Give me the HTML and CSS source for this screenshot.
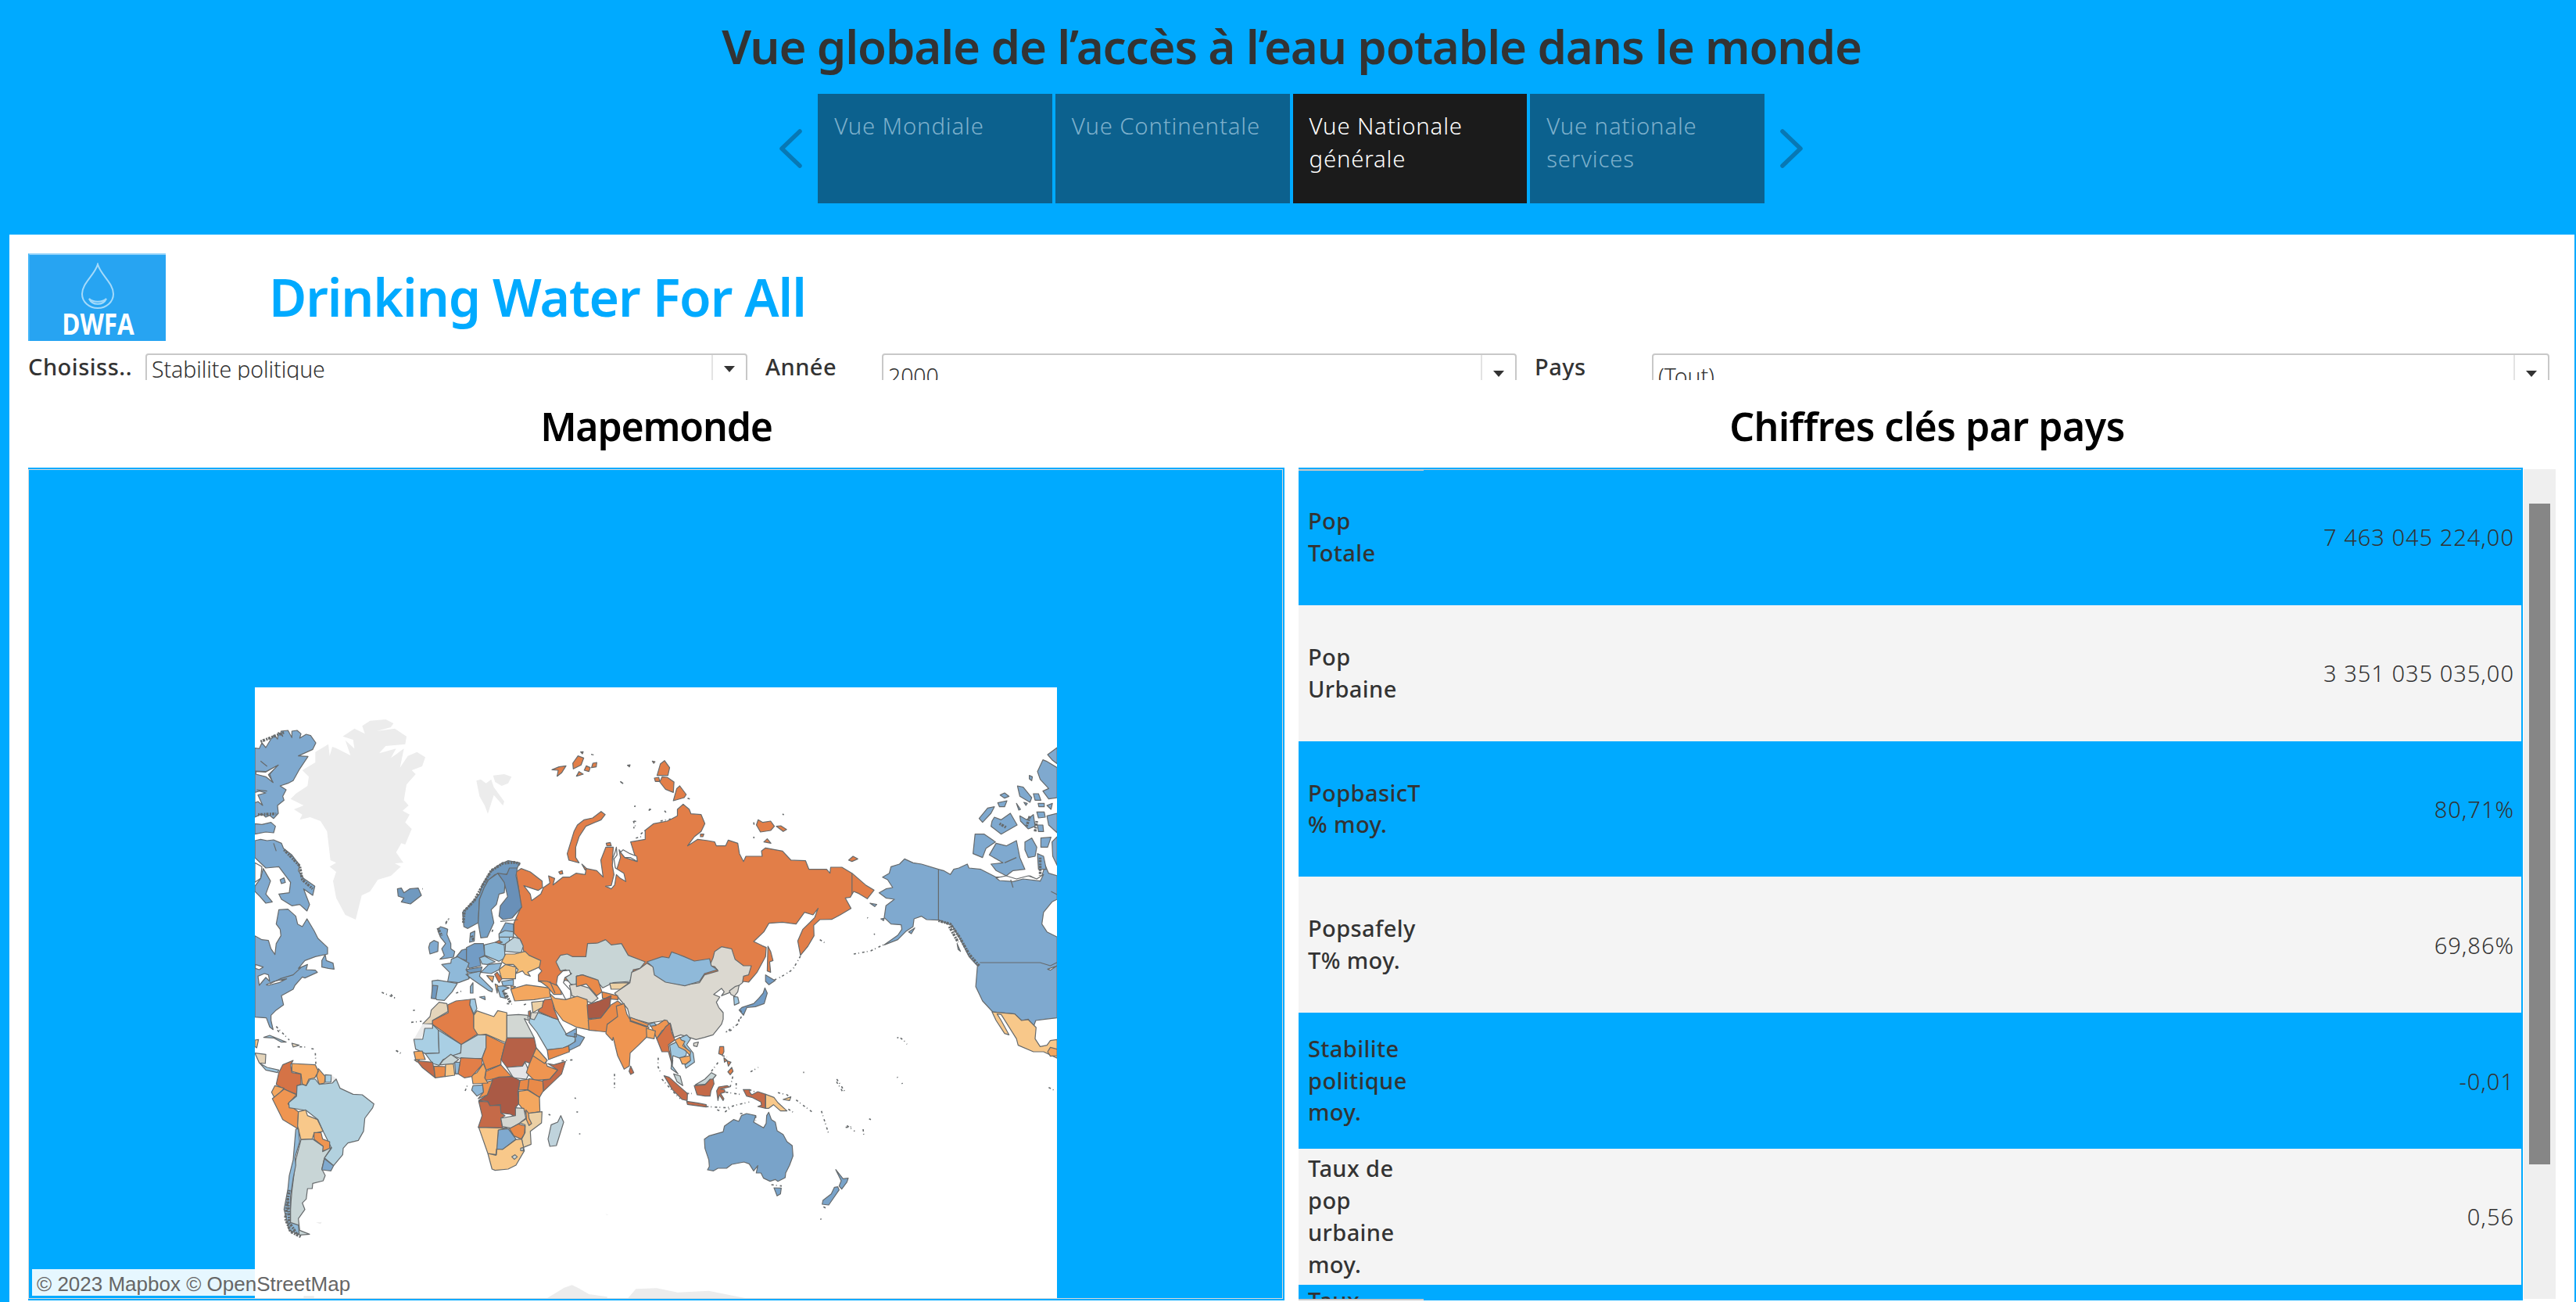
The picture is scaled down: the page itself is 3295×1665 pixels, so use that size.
FILE: index.html
```html
<!DOCTYPE html>
<html lang="fr">
<head>
<meta charset="utf-8">
<title>Drinking Water For All</title>
<link rel="stylesheet" href="styles.css">
</head>
<body>
<header class="story">
  <h1 class="story-title"><span>Vue globale de l’accès à l’eau potable dans le monde</span></h1>
  <nav class="story-nav">
    <svg class="chevron" viewBox="0 0 32 52"><path d="M28 4L5 26L28 48"/></svg>
    <div class="tabs">
      <a class="tab">Vue Mondiale</a>
      <a class="tab">Vue Continentale</a>
      <a class="tab active">Vue Nationale générale</a>
      <a class="tab">Vue nationale services</a>
    </div>
    <svg class="chevron" viewBox="0 0 32 52"><path d="M4 4L27 26L4 48"/></svg>
  </nav>
</header>
<main class="board">
  <div class="brand">
    <div class="logo">
      <svg class="drop" viewBox="0 0 46 60"><path d="M23 2C19 16 3 26 3 40A20 18 0 0 0 43 40C43 26 27 16 23 2Z"/><path d="M12 46C16 55 30 55 34 46"/><path d="M12 46C17 51 29 51 34 46"/></svg>
      <span class="logo-text">DWFA</span>
    </div>
    <h2 class="brand-title">Drinking Water For All</h2>
  </div>
  <div class="filters">
    <span class="f-label l1">Choisiss..</span>
    <div class="select s1"><span class="value">Stabilite politique</span><i class="arrow"></i></div>
    <span class="f-label l2">Année</span>
    <div class="select low s2"><span class="value">2000</span><i class="arrow"></i></div>
    <span class="f-label l3">Pays</span>
    <div class="select low s3"><span class="value">(Tout)</span><i class="arrow"></i></div>
  </div>
  <div class="views">
    <section class="view map-view">
      <h3 class="view-title t-map">Mapemonde</h3>
      <div class="map-frame">
        <svg class="map" viewBox="326 879 1026 781">
          <rect x="326" y="879" width="1026" height="781" fill="#fff"/>
          <!-- North Atlantic, eastern Canada -->
          <g transform="translate(320,870) scale(.33333)">
            <g class="void">
              <path d="M250 275L300 245L305 290L315 255L330 260L385 288L365 230L400 262L395 228L355 215L400 185L440 205L430 175L460 155L520 150L550 165L540 180L485 195L555 185L600 215L595 245L520 252L495 280L560 262L540 298L590 262L575 335L605 290L640 275L672 295L660 330L620 345L635 360L600 400L590 460L608 480L585 500L612 515L595 545L620 570L595 630L580 625L560 660L588 700L555 702L578 715L540 750L490 765L460 810L428 825L405 918L365 900L330 835L318 770L330 735L305 715L330 700L308 690L295 580L270 540L230 525L190 535L200 515L168 495L205 480L155 455L175 435L220 405L225 370L200 345L250 315Z"/>
              <path d="M868 385L885 380L905 395L925 380L935 410L975 465L970 480L935 440L912 512L900 480L880 445ZM932 365L975 360L1003 370L990 395L965 405L940 390Z"/>
            </g>
            <g class="us">
              <path d="M18 260L35 262L45 240L60 258L80 225L92 210L105 225L108 200L125 215L118 195L145 192L160 220L160 195L180 192L195 205L190 222L215 207L232 212L252 240L240 265L185 290L222 292L190 340L165 385L145 395L115 405L138 420L125 445L130 460L105 480L108 510L90 530L75 518L60 525L45 512L18 525Z"/>
              <path d="M18 550L45 553L80 545L97 560L90 585L60 582L18 590ZM18 615L40 610L65 615L90 612L120 625L128 645L160 670L190 710L185 730L205 760L248 790L240 825L205 800L228 860L218 885L190 860L160 865L120 840L110 820L150 815L155 775L110 715L60 720L18 680ZM18 790L40 760L50 722L78 770L60 820L85 850L60 855L38 830L18 810Z"/>
              <path d="M18 980L45 995L70 998L80 1030L95 1052L100 1010L118 980L115 955L100 935L110 880L145 878L175 905L182 935L200 945L218 915L245 960L260 990L297 1025L297 1050L250 1060L210 1075L185 1105L220 1090L215 1110L250 1112L258 1120L210 1142L200 1138L172 1170L165 1185L120 1210L128 1245L100 1265L80 1285L80 1305L88 1340L75 1330L62 1295L18 1292ZM275 1075L288 1052L292 1075L318 1085L322 1108L300 1105L275 1100ZM115 765L130 758L135 775L120 780Z"/>
              <path d="M18 700L45 715L40 760L18 775Z" fill="#fff"/>
              <path d="M20 1090L50 1100L35 1110L20 1105ZM30 1135L55 1125L70 1130L75 1155L60 1140L35 1170ZM62 1168L90 1155L140 1145L110 1160L70 1170Z" fill="#fff"/>
              <path d="M75 1165L115 1145L165 1130L195 1102M18 348L60 350L100 330L75 360L85 390M40 310L65 330M25 420L65 425M90 625L100 655" fill="none"/>
              <path d="M22 350L60 352L108 325L70 362L88 392L60 370L22 360ZM18 430L35 425L60 432L30 440L48 480L30 465L18 470Z" fill="#fff"/>
            </g>
            <path class="shag" d="M130 650L190 712L200 765L240 800M40 235L130 200M30 515L100 512" />
            <path class="b2" d="M565 800L580 797L590 815L612 800L645 797L657 825L615 858L580 850L590 835L568 828Z"/>
            <path class="ru" d="M1158 343L1185 332L1212 328L1195 355L1178 368L1182 345ZM1238 318L1258 290L1280 298L1270 325L1240 340ZM1310 335L1315 318L1330 315L1328 332ZM1282 345L1290 328L1305 335L1300 350ZM1252 368L1262 350L1278 360ZM1268 275L1278 274L1275 282ZM1448 326L1458 324L1455 332ZM1308 284L1318 286"/>
            <path class="speck" d="M1420 388L1435 398M1475 482L1478 485M1472 540L1482 542M1472 562L1473 568M1530 500L1536 490M1480 605L1500 600M750 930L768 908"/>
          </g>
          <!-- Russia, Central and East Asia, western North America -->
          <g transform="translate(680,940) scale(.43367,.33333)">
            <path class="ru" d="M-31 512L-4 525L31 560L32 585L19 596L-23 578L-4 610L0 635L27 610L35 585L54 568L50 540L68 550L63 575L92 545L112 545L131 530L158 535L161 512L192 520L211 545L204 480L219 430L241 430L238 480L250 520L262 470L258 440L275 470L310 485L292 410L335 400L335 365L360 340L400 330L415 320L430 310L430 285L447 265L465 285L470 302L500 305L511 340L500 370L480 390L460 425L490 400L520 405L540 410L545 425L572 425L580 403L608 415L613 455L625 485L632 465L680 465L678 445L690 433L740 445L765 480L808 482L818 515L870 515L880 530L882 507L915 507L945 530L985 575L1010 595L990 628L965 608L950 600L940 622L925 625L942 665L910 690L885 707L850 708L832 730L833 770L815 810L793 845L785 790L800 745L820 720L835 700L845 665L830 690L805 680L780 725L740 718L700 722L685 755L655 792L680 808L692 815L690 850L665 910L640 948L625 945L600 970L340 900L140 960L100 940L75 965L60 960L20 945L20 920L30 905L-23 830L-31 790L-52 760L-52 720L-31 660L-38 590L-46 525Z"/>
            <path class="ru" d="M105 455L125 370L135 345L155 325L180 318L205 293L217 305L205 325L160 350L140 390L130 430L130 470L140 490L110 480ZM148 495L162 512L158 518ZM80 525L90 520L92 532L84 534ZM220 415L232 412L235 425L222 425ZM370 155L380 110L392 98L407 125L402 155ZM385 160L400 162L420 180L418 220L395 208L378 180ZM362 165L375 162L378 178L365 178ZM418 252L428 205L437 195L456 228L450 240ZM663 345L668 325L682 335L705 330L716 350L705 366L675 372ZM722 350L735 348L752 362L742 370ZM685 410L695 398L706 415ZM935 480L948 465L962 475L945 485ZM697 810L705 830L712 865L702 870L705 910L695 905ZM498 380L508 380L505 390L498 390ZM356 100L364 102L360 108Z"/>
            <path fill="#fff" class="ln" d="M250 430L252 460L243 475L247 510L272 530L278 562L262 550L250 535L245 575L235 590L218 580L235 577L243 535L238 500L240 470L246 450ZM270 440L290 455L310 465L312 485L292 470L275 470L262 450Z"/>
            <path class="ln" fill="none" d="M945 530V610"/>
            <path class="kz" d="M72 870L85 845L105 840L120 850L160 850L165 800L195 798L218 785L235 805L265 800L285 845L335 870L320 895L300 900L290 945L240 950L210 970L190 940L150 920L132 925L132 962L115 955L100 930L118 915L100 900L85 905Z"/>
            <path class="cn" d="M340 875L360 890L365 920L400 948L450 960L495 950L510 920L550 905L540 888L525 885L535 855L540 830L560 812L590 820L600 860L625 885L648 885L640 920L625 925L622 950L590 985L560 1000L568 985L560 972L537 995L555 1005L545 1025L552 1045L565 1065L565 1090L560 1110L535 1150L510 1160L485 1168L465 1160L440 1150L420 1160L410 1110L395 1095L345 1105L290 1085L283 1050L245 990L290 950L295 910L320 895ZM478 1182L492 1178L488 1195L478 1192Z"/>
            <path class="b4" d="M340 870L385 850L405 855L413 832L430 840L450 850L480 867L525 858L530 885L548 900L510 915L495 945L452 962L395 948L362 920L358 890Z"/>
            <path class="cn" d="M583 982L600 965L612 960L608 985L598 1002L588 995Z"/>
            <path class="b5" d="M596 1003L608 1005L612 1028L598 1036Z"/>
            <path class="b3" d="M690 920L718 942L700 958L690 945ZM688 970L695 990L686 1030L660 1042L635 1045L625 1075L612 1055L620 1045L655 1030L670 1010L683 990Z"/>
            <g class="us">
              <path d="M1035 545L1055 530L1060 505L1085 495L1100 475L1125 490L1150 495L1200 515L1215 520L1235 535L1245 515L1260 510L1285 495L1290 510L1325 515L1370 545L1400 545L1425 555L1470 540L1500 560L1515 500L1525 530L1550 540L1550 630L1535 640L1510 680L1505 725L1520 755L1550 775V1085L1515 1090L1487 1095L1480 1120L1465 1090L1445 1095L1425 1070L1360 1062L1330 1020L1310 965L1315 885L1290 850L1265 785L1240 730L1200 710L1165 708L1150 695L1128 705L1125 735L1105 752L1080 785L1040 805L1080 768L1092 745L1090 728L1060 725L1040 700L1045 655L1070 630L1045 625L1025 605L1045 590L1065 585L1050 555Z"/>
              <path d="M1308 380L1335 380L1368 410L1340 435L1330 470L1302 455ZM1370 415L1400 425L1430 405L1440 470L1455 515L1420 520L1400 540L1370 520L1355 495L1390 490L1350 460ZM1320 320L1345 280L1365 275L1355 300L1330 335ZM1358 330L1365 315L1385 325L1412 300L1432 345L1385 380L1355 350ZM1382 230L1395 222L1408 235L1395 242ZM1375 260L1402 252L1395 275L1380 275ZM1433 195L1450 200L1475 240L1470 258L1440 235ZM1480 225L1495 225L1502 250L1485 250ZM1440 310L1460 325L1480 305L1485 350L1465 360L1442 330ZM1455 410L1475 395L1490 430L1485 465L1465 470L1455 440ZM1502 395L1532 392L1522 430L1502 430ZM1492 455L1510 465L1518 515L1495 515ZM1535 410L1550 390V500L1537 465ZM1490 295L1512 295L1515 315L1495 318ZM1520 310L1550 300V375L1525 345ZM1492 345L1508 345L1510 370L1495 370ZM1494 262L1512 262L1512 275L1496 275ZM1520 270L1536 262L1532 285ZM1492 140L1508 95L1518 100L1550 125V240L1525 245L1508 215L1525 205L1500 170ZM1522 75L1550 48V110L1535 95ZM1468 155L1477 160L1475 175L1468 168ZM1430 262L1442 285L1437 288ZM1452 258L1462 262L1458 270Z"/>
              <path d="M998 645L1018 650L1012 658ZM1030 705L1040 703L1038 712ZM1112 755L1130 740L1120 762ZM1255 800L1265 830L1258 822Z"/>
              <path fill="#fff" d="M1370 548L1400 540L1430 552L1465 540L1490 552L1510 535L1500 560L1450 552L1420 562L1380 558ZM1522 898L1550 885L1530 902Z"/>
              <path fill="none" d="M1200 515V710M1322 873H1500L1530 885L1550 872M1413 555L1420 585M1532 600L1550 612M1430 470L1395 490"/>
            </g>
            <path class="shag" d="M1200 712L1235 725L1262 775L1290 840L1320 885M1232 735L1258 795M1500 470L1500 540M1460 350L1470 310M1490 330L1485 370M1380 340L1400 355"/>
            <path class="mx" d="M1358 1062L1425 1070L1445 1095L1465 1092L1488 1122L1485 1165L1500 1195L1520 1190L1530 1172L1550 1168V1240L1510 1215L1480 1215L1435 1190L1430 1165L1385 1072L1373 1070L1385 1095L1408 1150L1395 1145L1370 1095Z"/>
            <path class="o3" d="M1522 1215L1530 1198L1550 1205V1230L1530 1232Z"/>
            <path class="speck" d="M950 840L1000 828L1045 800M793 848L770 900L735 928L715 940M612 1090L605 1120M590 1132L570 1140M1078 1160L1082 1162M1088 1162L1105 1180L1107 1186M850 785L865 797M990 700L992 702M1010 762L1012 766M1525 1352L1540 1362M1078 1312L1080 1314M1092 1335L1094 1338M900 1320L925 1370M655 335L657 350M740 303L744 306M655 390L656 396M283 117L290 116M265 182L270 186M303 272L306 274M300 330L306 350M346 288L352 284M392 290L398 300M322 380L335 365M380 330L410 322M460 242L468 246"/>
          </g>
          <!-- Europe -->
          <g transform="translate(500,1070) scale(.33333)">
            <path class="b2" d="M280 345L275 290L300 265L340 220L350 185L385 130L420 105L450 92L495 100L485 120L440 145L400 145L370 170L340 240L335 330L295 352Z"/>
            <path class="b3b" d="M335 330L340 240L358 195L375 165L410 140L438 175L435 215L415 220L405 260L385 280L395 330L370 385L345 388Z"/>
            <path class="b2b" d="M455 120L485 120L480 150L490 200L502 270L465 312L430 318L415 305L420 265L448 230L435 175L410 140L445 145Z"/>
            <path class="b1" d="M190 345L205 350L218 355L215 375L230 410L230 430L245 440L240 462L188 470L205 455L195 430L210 410L190 385L180 360ZM302 405L305 370L322 362L320 400ZM150 408L165 398L182 405L180 440L150 450L145 425ZM440 330L470 335L470 385L440 370L415 375Z"/>
            <path class="b5" d="M438 360L470 365V385L415 385L415 372ZM415 385L455 385L455 410L420 415Z"/>
            <path class="by" d="M438 440L440 410L475 385L495 392L508 420L500 445Z"/>
            <path class="r" d="M400 405L415 398L428 405L410 410Z"/>
            <path class="b3" d="M290 425L320 410L355 410L360 455L340 465L345 495L300 505L288 480Z"/>
            <path class="b5" d="M358 415L400 405L435 415L438 465L415 478L360 455ZM340 465L360 458L400 480L370 490L350 488Z"/>
            <path class="b3" d="M250 462L272 435L290 430L290 475Z"/>
            <path class="b4" d="M195 490L230 485L232 470L255 460L300 485L290 510L300 545L260 560L218 555L225 520ZM345 520L375 490L425 485L415 510L385 525ZM288 528L345 515L340 535L390 585L388 595L375 590L310 545ZM340 615L360 612L362 625ZM305 575L315 560L315 600L305 600ZM425 555L470 548L470 570L430 572ZM408 575L430 572L455 580L430 590L440 620L420 615Z"/>
            <path class="b2" d="M288 510L350 500L345 516L300 522Z"/>
            <path class="b5" d="M158 553L180 550L255 563L235 595L205 628L175 625L160 590Z"/>
            <path class="b2" d="M160 570L180 572L172 622L155 620Z"/>
            <path class="yl" d="M415 510L440 490L480 500L478 545L425 545ZM425 480L440 450L475 450L515 440L530 455L575 475L570 500L525 520L535 535L515 528L505 515L480 525L488 510L470 490L440 490Z"/>
            <path class="o3" d="M368 533L395 535L390 558ZM400 565L410 570L408 600ZM460 585L520 568L608 580L612 615L550 625L475 630ZM460 572L478 575L462 585Z"/>
            <path class="r" d="M398 528L408 520L426 545L415 560Z"/>
            <path class="o2" d="M570 553L600 555L648 575L655 605L625 605L600 575Z"/>
            <path class="ln" fill="#fff" d="M635 565L640 535L660 515L685 512L690 528L668 540L662 560L690 590L690 620L672 626L655 595Z"/>
            <path class="ln" fill="none" d="M420 325L488 318M610 555L630 600"/>
            <path class="shag" d="M278 330L282 285L320 245L350 190L385 130L430 102L480 98L495 108M180 350L195 380M310 380L318 400M430 590L445 620M440 600L460 640"/>
            <path class="speck" d="M210 335L225 310M120 200L122 200M0 605L18 622M78 712L118 708M85 667L92 665M20 820L35 832M250 600L272 592M388 365L394 350M445 640L465 642M510 645L525 640"/>
          </g>
          <!-- Africa, Middle East, South America -->
          <g transform="translate(320,1230) scale(.33333)">
            <path class="mo" d="M725 155L755 160L760 190L700 225L700 238L662 238L690 210L695 185Z"/>
            <path class="void" d="M662 238L700 240L700 255L670 255L655 297L628 297Z"/>
            <path class="ru" d="M758 165L790 150L845 144L843 165L858 205L858 250L875 275L810 317L700 240L700 225L760 195Z"/>
            <path class="b5" d="M845 144L863 142L870 180L858 200L843 165Z"/>
            <path class="mx" d="M870 188L935 210L950 187L985 195V312L905 278L875 282L858 255V205Z"/>
            <path class="eg" d="M985 205L1030 202L1065 205L1068 225L1052 218L1090 292H985Z"/>
            <path class="b6" d="M628 297H662L670 255H700V240L722 262L725 350L672 352L635 335Z"/>
            <path class="b6" d="M722 262L810 317L808 350L740 375L725 397L700 390L672 352L725 350Z"/>
            <path class="by" d="M905 280L905 330L890 370L810 372L775 360L808 350L810 317L875 280Z"/>
            <path class="o1" d="M905 280L978 315L963 375L962 395L905 415L890 370L905 330Z"/>
            <path class="su" d="M985 292H1090L1098 330L1075 390L1055 382L1045 400L985 405L963 375L978 315Z"/>
            <path class="ss" d="M985 405L1045 400L1055 385L1072 425L1060 450L1010 445Z"/>
            <path class="o2" d="M1085 360L1130 370L1140 400L1180 415L1150 450L1090 455L1060 425L1070 395Z"/>
            <path class="o3" d="M1098 330L1140 378L1130 390L1085 360Z"/>
            <path class="rd" d="M1142 390L1165 395L1210 382L1195 430L1125 497L1123 455L1150 450L1180 415Z"/>
            <path class="o1" d="M1070 448L1123 458L1125 495L1110 520L1065 490ZM1035 455L1070 450L1065 490L1030 492ZM962 395L1003 440L930 450L900 455L905 420Z"/>
            <path class="o3" d="M1030 497L1065 492L1110 520L1112 575L1060 582L1030 545Z"/>
            <path class="dk" d="M930 450L955 442L1005 440L1035 455L1027 500L1030 545L1018 560L1025 600L1000 585L962 580L960 548L920 552L912 535L877 532L910 510Z"/>
            <path class="o2" d="M890 465L930 455L910 510L875 525L895 500Z"/>
            <path class="b4" d="M855 475L892 472L895 500L870 515L850 492Z"/>
            <path class="o3" d="M895 390L905 415L900 445L912 465L855 468L850 435L870 425Z"/>
            <path class="ru" d="M808 368L890 372V395L850 440L822 445L798 430Z"/>
            <path class="rd" d="M877 535L912 537L920 552L960 550L962 580L978 590L962 600L968 638L875 635L890 590ZM640 380L700 385L705 410L710 445L660 405Z"/>
            <path class="za" d="M962 600L1018 590L1018 560L1050 562L1058 600L1035 618L1000 638L968 632Z"/>
            <path class="mz" d="M1060 582L1120 575L1118 618L1075 650L1078 700L1048 712L1042 680L1055 655V625L1035 618L1062 600Z"/>
            <path class="o3" d="M1058 568L1068 580L1070 600L1080 620L1070 628L1060 605ZM628 345L660 342L672 375L635 375ZM630 376L650 376L640 384Z"/>
            <path class="o1" d="M995 640L1030 622L1055 630L1052 660L1040 680L1012 668ZM705 400L750 402L748 440L710 445Z"/>
            <path class="us" d="M952 645L990 640L1020 680L970 720L945 718Z"/>
            <path class="mx" d="M877 635L985 638L952 645L945 740L912 735ZM912 735L943 742L945 718L968 720L1020 682L1042 680L1052 725L1020 780L990 795L940 800L928 795ZM750 392L780 392L785 435L748 440Z"/>
            <path class="kz" d="M1004 748L1016 740L1025 748L1014 758ZM1038 715L1048 712V725L1038 724ZM728 395L740 378L770 355L800 375L780 390L735 395Z"/>
            <path class="b4" d="M785 385L805 385L798 430H788Z"/>
            <path class="by" d="M1192 590L1203 615L1175 705L1150 708L1143 680L1155 625L1180 615Z"/>
            <path class="b6" d="M1075 205L1105 195L1180 220L1215 280L1248 290L1245 310L1200 332L1140 338L1100 270L1070 232Z"/>
            <path class="o1" d="M1140 338L1200 330L1222 322L1225 345L1145 375Z"/>
            <path class="us" d="M1245 275L1283 290L1265 320L1225 340L1222 322L1248 305ZM1210 278L1252 255V288L1218 284Z"/>
            <path class="r" d="M1130 145L1160 142L1165 180L1183 222L1160 215L1105 190ZM1068 190L1076 188L1074 215L1068 205Z"/>
            <path class="mz" d="M1080 155L1125 150L1120 175L1085 195Z"/>
            <path class="cn" d="M1078 195L1105 195L1090 222L1075 218ZM1225 90L1250 85L1300 100L1335 140L1310 158L1235 130Z"/>
            <path class="o3" d="M1150 122L1170 140L1210 145L1255 132L1293 145L1300 220L1305 262L1250 250L1200 225L1170 185Z"/>
            <path class="o1" d="M1252 55L1275 50L1335 70L1350 115L1330 130L1290 85L1252 95ZM1350 115L1410 130L1412 145L1352 140Z"/>
            <path class="mz" d="M1380 82L1455 80L1420 105L1385 105Z"/>
            <path class="o1" d="M1297 222L1345 215L1385 165L1410 150L1430 165L1410 215L1370 240L1375 270L1300 262Z"/>
            <path class="dk" d="M1293 165L1340 150L1385 130L1380 170L1345 215L1297 218Z"/>
            <path class="o2" d="M1405 170L1435 160L1445 200L1460 225L1530 250L1525 285L1490 320L1458 350L1455 400L1435 412L1410 360L1393 290L1390 302L1365 275L1370 240L1410 210ZM1460 213L1530 240L1522 250L1458 228Z"/>
            <path class="rd" d="M1460 400L1472 425L1460 432L1454 420Z"/>
            <path class="r" d="M110 425L125 395L165 378L155 395L160 425L195 430V470L180 475L178 508L130 490L100 470Z"/>
            <path class="o3" d="M160 390L250 395L262 420L248 445L225 450L215 475L200 470L195 430L160 420ZM262 410L288 440L285 465L265 470L255 440ZM95 475L130 485L95 525L82 500Z"/>
            <path class="b6" d="M288 433L312 435L310 462H288Z"/>
            <path class="void" d="M312 435L335 450L318 468Z"/>
            <path class="o2" d="M85 525L130 488L178 510L145 545L185 575L182 640L125 605Z"/>
            <path class="br" d="M180 475L200 470L215 475L230 450L250 450L265 470L315 465L330 450L345 485L395 508L430 510L475 545L470 560L440 600L435 650L415 685L375 695L357 715L355 740L320 782L285 752L312 715L300 690L280 650L260 605L215 570L150 560L148 540L178 515Z"/>
            <path class="mx" d="M185 575L213 568L220 590L258 605L280 650L245 658L238 680L195 682L182 630Z"/>
            <path class="o2" d="M245 655L272 655L278 680L305 690V722L275 725L280 708L245 680Z"/>
            <path class="kz" d="M195 682L240 680L280 708L278 728L312 712L285 752L275 795L288 820L280 840L240 850L238 870L220 870L215 910L200 925L210 950L185 985L190 1030L228 1045L190 1048L150 1000L160 880L175 760Z"/>
            <path class="b4" d="M175 642L185 640L190 690L172 750L175 780L165 830L155 900V1000L185 1010L188 1045L150 1030L130 950L145 870L150 820L165 760Z"/>
            <path class="us" d="M285 755L320 782L310 802L275 798Z"/>
            <path class="b5" d="M52 290L75 282L138 308L120 308L90 292ZM38 390L65 405L110 415L105 425L60 415Z"/>
            <path class="mo" d="M18 350L60 355L58 390L35 388ZM160 312L188 320L165 327Z"/>
            <path class="mx" d="M18 300L32 298L25 330L18 325Z"/>
            <path class="shag" d="M150 875L142 925L135 985L155 1035L195 1055M145 910L150 1000L180 1045"/>
            <path class="speck" d="M100 248L150 300M105 262L115 275M190 326L215 327M105 326L120 327M235 333L245 335M250 350L252 392M505 117L560 140M560 340L578 350M825 495L835 470M1195 380L1238 376M1145 585L1152 588M1262 660L1267 660M1398 430V490M1245 522L1250 524M1252 575L1258 577"/>
            <path class="void" d="M1140 1290L1205 1250L1235 1240L1260 1252L1300 1275L1370 1285V1300H1140ZM1450 1290L1480 1255L1560 1252L1640 1268L1760 1262L1850 1280L1900 1290ZM205 1282H245V1290H205ZM252 1000L275 998L270 1006ZM1362 968L1372 968V972Z"/>
            <path class="void" d="M0 1290H3100V1296H0Z"/>
          </g>
          <!-- South-East Asia and Oceania -->
          <g transform="translate(830,1250) scale(.33333)">
            <path class="o2" d="M5 180L35 180L60 163L70 165L80 185L50 205L30 235L20 210Z"/>
            <path class="o3" d="M-10 195L25 205L20 235L-8 230Z"/>
            <path class="b4" d="M2 178L20 172L28 184L5 187Z"/>
            <path class="r" d="M65 188L82 175L87 210L100 240L75 258L78 280L92 320L88 332L75 285L50 285L30 235L50 210Z"/>
            <path class="b5" d="M80 260L105 248L145 285L142 300L120 310L92 300L90 340L112 370L85 350L88 320ZM118 232L145 220L160 235L145 258L170 290L175 325L142 348L138 335L158 320L155 290Z"/>
            <path class="o3" d="M100 240L118 230L125 240L138 245L130 262L160 285L158 300L140 280L115 268ZM118 308L158 300L160 318L142 332L128 332Z"/>
            <path class="kz" d="M95 370L120 378L130 415L108 400ZM178 412L215 390L240 365L258 375L245 390L215 410Z"/>
            <path class="rd" d="M58 377L78 383L125 425L148 445L147 472L128 468L90 430ZM145 475L190 482L220 488V497L148 487ZM174 415L215 412L235 390H247L250 408L238 435L235 455L215 455L185 450ZM260 435L268 420L300 415L310 420L275 428L290 430L292 440L275 445L288 465L285 472L270 450L265 472ZM362 430L385 430L388 442L395 450L418 438L448 448V502L418 495L432 490L430 478L395 460L375 455Z"/>
            <path class="mx" d="M448 448L480 460L495 480L530 512L505 512L478 488L460 502H448ZM515 468L545 458L540 472Z"/>
            <path class="ru" d="M272 265L287 265L288 285L282 298L268 292ZM303 362L318 345L323 360L312 373ZM288 308L300 318L290 325ZM300 320L315 325L305 340Z"/>
            <path class="au" d="M213 620L230 608L285 592L290 570L325 545L345 552L355 530L375 522L410 530L402 555L440 577L450 560L452 530L460 517L470 545L485 555L492 588L515 602L530 630L550 645L553 685L540 720L525 750L523 768L495 782L485 775L465 782L440 770L430 750L412 750L418 722L402 742L385 715L365 708L318 717L298 732H265L248 742L225 738L232 725L230 700L215 655Z"/>
            <path class="au" d="M480 807L508 808L505 830L492 838ZM717 737L745 772L765 770L760 785L740 812L730 800L738 780ZM725 803L730 815L690 873L665 870L668 855L700 830L712 805Z"/>
            <path class="ln" fill="none" d="M448 448V502"/>
            <path class="speck" d="M220 495L300 500L340 488L385 478M262 508L275 512M292 516L310 502M335 405V430M295 440L360 450M385 430L405 438M50 390L95 440L120 465M36 308L34 340L45 365M240 360L270 320M282 300L300 305M565 470L625 515M535 505L555 518M662 512L690 600M755 575L785 572M760 568L790 590M845 542L852 545M822 582L825 608M350 125L362 140M355 150L340 180L295 210M322 380L312 420M390 362L420 345M592 364L596 364M720 400L745 440M470 795L510 800M670 880L680 885M658 926L662 928M410 530V550M350 522H360M495 442L530 450L548 465M145 445H165"/>
          </g>
        </svg>
        <span class="credits">© 2023 Mapbox © OpenStreetMap</span>
      </div>
    </section>
    <section class="view data-view">
      <h3 class="view-title t-data">Chiffres clés par pays</h3>
      <div class="grid">
        <div class="rows">
          <div class="row"><span class="name">Pop Totale</span><span class="num">7 463 045 224,00</span></div>
          <div class="row alt"><span class="name">Pop Urbaine</span><span class="num">3 351 035 035,00</span></div>
          <div class="row"><span class="name">PopbasicT % moy.</span><span class="num">80,71%</span></div>
          <div class="row alt"><span class="name">Popsafely T% moy.</span><span class="num">69,86%</span></div>
          <div class="row"><span class="name">Stabilite politique moy.</span><span class="num">-0,01</span></div>
          <div class="row alt"><span class="name">Taux de pop urbaine moy.</span><span class="num">0,56</span></div>
          <div class="row cut"><span class="name">Taux</span></div>
        </div>
        <div class="scroll"><div class="thumb"></div></div>
      </div>
    </section>
  </div>
</main>
</body>
</html>
```
FILE: styles.css
```css
* { box-sizing: border-box; }
body { margin: 0; width: 3295px; height: 1665px; overflow: hidden; background: #00aaff; color: #333; font-family: "Noto Sans", sans-serif; font-size: 29px; }
h1, h2, h3 { margin: 0; }

.story { height: 300px; display: flex; flex-direction: column; align-items: center; }
.story-title { height: 120px; line-height: 119px; font-size: 60px; font-weight: 600; letter-spacing: -1.15px; padding-left: 9px; white-space: nowrap; }
.story-nav { display: flex; align-items: center; gap: 19px; padding-left: 8px; }
.tabs { display: flex; gap: 4px; }
.tab { width: 299.7px; height: 140px; padding: 20px 20px 0 21px; background: #0c618e; color: #7db0cc; line-height: 42px; font-size: 29.3px; font-weight: 300; letter-spacing: .85px; }
.tab.active { background: #1b1b1b; color: #fff; }
.chevron { width: 32px; height: 52px; }
.chevron path { fill: none; stroke: #0878b4; stroke-width: 5.5; stroke-linecap: round; stroke-linejoin: round; }

.board { height: 1365px; margin: 0 2px 0 12px; padding: 24px 0 0 24px; background: #fff; }
.brand { display: flex; height: 112px; }
.logo { width: 176px; height: 112px; background: #27a4f2; border-top: 2px solid #8fd2fb; border-left: 2px solid #41b4f8; display: flex; flex-direction: column; align-items: center; }
.drop { width: 46px; height: 60px; margin-top: 10px; }
.drop path { fill: none; stroke: #a5dafa; stroke-width: 2; }
.logo-text { color: #fff; font: bold 37px/36px "Open Sans", sans-serif; transform: scaleX(.85); }
.brand-title { margin-left: 132px; line-height: 110px; font-size: 66px; font-weight: 600; letter-spacing: -1.1px; color: #00aaff; white-space: nowrap; }

.filters { display: flex; margin-top: 16px; height: 34px; overflow: hidden; }
.f-label { line-height: 33px; font-weight: 500; white-space: nowrap; letter-spacing: .5px; }
.l1 { width: 150px; }
.l2 { width: 149px; margin-left: 23px; }
.l3 { width: 150px; margin-left: 23px; }
.select { display: flex; height: 60px; border: 2px solid #c8c8c8; border-radius: 4px; font-weight: 300; font-size: 28.5px; letter-spacing: -.1px; }
.s1 { width: 770px; }
.s2 { width: 812px; }
.s3 { width: 1148px; }
.value { flex: 1; padding-left: 6px; line-height: 36px; }
.low .value { line-height: 54px; }
.arrow { width: 44px; border-left: 2px solid #e3e3e3; padding: 14px 0 0 14px; }
.arrow::after { content: ""; display: block; width: 0; border: 7px solid transparent; border-top: 8px solid #333; border-bottom: 0; }
.low .arrow { padding-top: 20px; }

.views { display: flex; gap: 18px; }
.view-title { height: 112px; line-height: 119px; font-size: 50px; font-weight: 600; color: #000; text-align: center; white-space: nowrap; }
.t-map { letter-spacing: -1.2px; }
.t-data { letter-spacing: -.5px; }
.map-view { width: 1607px; }
.map-frame { position: relative; height: 1065px; background: #00aaff; border: 2px solid #00aaff; border-left-width: 0; }
.map-frame::before { content: ""; position: absolute; inset: 0; border: 1px solid #d9d9d9; }
.map { display: block; width: 1026px; height: 781px; margin: 279px 0 0 290px; position: relative; }
.map path { stroke: #666a6c; stroke-width: 1.2px; stroke-linejoin: round; vector-effect: non-scaling-stroke; }
.credits { position: absolute; left: 5px; bottom: 4px; height: 34px; padding: 0 8px 0 6px; background: rgba(255, 255, 255, .9); color: #666; font: 26px/38px "Liberation Sans", Arial, sans-serif; white-space: nowrap; }
.map path.void, .map .void path { fill: #ececec; stroke: none; }
.map path.speck { fill: none; stroke-width: 1.6px; stroke-dasharray: 3 3 1 4; }
.map path.shag { fill: none; stroke-width: 3.5px; stroke-dasharray: 2 1 3 1.5; }
.us, .b1 { fill: #7fa9cf; }
.b2 { fill: #7099bf; }
.b2b { fill: #6990b8; }
.b3 { fill: #729cc5; }
.b3b { fill: #76a0c5; }
.b4 { fill: #8fb9d9; }
.b5 { fill: #a0c8e1; }
.b6 { fill: #a9cfe4; }
.br { fill: #b2d1df; }
.by { fill: #bfd3dc; }
.kz { fill: #c8d5d6; }
.eg { fill: #d2d7d3; }
.za { fill: #d4d6d0; }
.cn { fill: #dbd8d0; }
.ss { fill: #e4e4e7; }
.mo { fill: #e4d4ba; }
.mz { fill: #ecd0a4; }
.mx { fill: #f8c88a; }
.yl { fill: #f7be76; }
.o3 { fill: #f4a75f; }
.o2 { fill: #ef9551; }
.o1 { fill: #e98a49; }
.ru { fill: #e27e48; }
.r { fill: #d57346; }
.rd { fill: #c56a48; }
.su { fill: #b66147; }
.dk { fill: #aa5a45; }
.au { fill: #79a3c9; }

.data-view { width: 1608px; }
.grid { display: flex; height: 1065px; }
.rows { width: 1566px; height: 1065px; overflow: hidden; background: #00aaff; border-right: 2px solid #00aaff; padding-top: 2px; position: relative; }
.rows::before { content: ""; position: absolute; left: 0; right: 0; top: 2px; height: 1px; background: #c8c8c8; }
.rows::after { content: ""; position: absolute; left: 0; top: 1063px; width: 160px; height: 2px; background: #c8c8c8; box-shadow: 0 -1061px #c8c8c8; }
.row { display: flex; align-items: center; justify-content: space-between; height: 173.8px; padding: 0 10px 0 12px; }
.alt { background: #f4f4f4; }
.name { width: 148px; line-height: 40.8px; font-weight: 500; font-size: 29px; letter-spacing: .4px; }
.num { font-weight: 300; font-size: 29px; letter-spacing: 1px; margin-right: -1px; }
.cut { align-items: flex-start; }
.scroll { width: 41px; margin: 2px 0 2px 1px; padding: 44px 7px 0; background: #efefef; }
.thumb { height: 845px; background: #868686; }
```
